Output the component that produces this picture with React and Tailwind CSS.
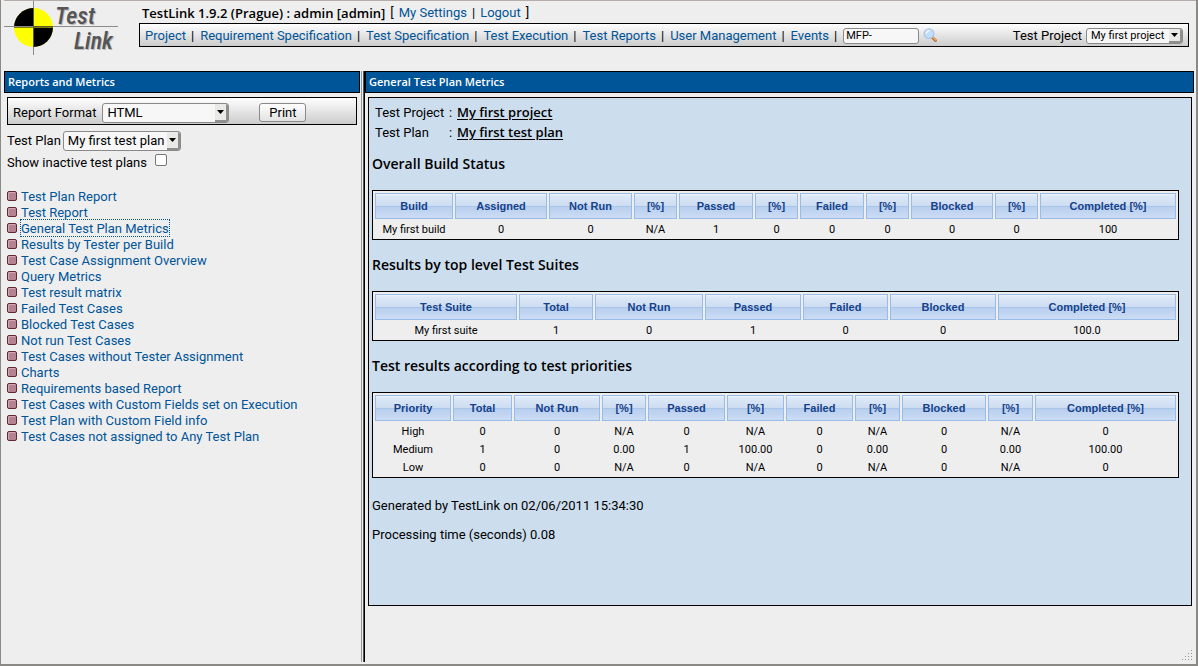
import React from "react";

const NAV = [
  "Project",
  "Requirement Specification",
  "Test Specification",
  "Test Execution",
  "Test Reports",
  "User Management",
  "Events",
];

const REPORTS = [
  "Test Plan Report",
  "Test Report",
  "General Test Plan Metrics",
  "Results by Tester per Build",
  "Test Case Assignment Overview",
  "Query Metrics",
  "Test result matrix",
  "Failed Test Cases",
  "Blocked Test Cases",
  "Not run Test Cases",
  "Test Cases without Tester Assignment",
  "Charts",
  "Requirements based Report",
  "Test Cases with Custom Fields set on Execution",
  "Test Plan with Custom Field info",
  "Test Cases not assigned to Any Test Plan",
];

const BUILDS = {
  widths: [78, 92, 83, 43, 74, 43, 64, 43, 82, 43, 136],
  head: ["Build", "Assigned", "Not Run", "[%]", "Passed", "[%]", "Failed", "[%]", "Blocked", "[%]", "Completed [%]"],
  rows: [["My first build", "0", "0", "N/A", "1", "0", "0", "0", "0", "0", "100"]],
};

const SUITES = {
  widths: [142, 74, 108, 96, 85, 106, 178],
  head: ["Test Suite", "Total", "Not Run", "Passed", "Failed", "Blocked", "Completed [%]"],
  rows: [["My first suite", "1", "0", "1", "0", "0", "100.0"]],
};

const PRIORITIES = {
  widths: [76, 59, 86, 44, 77, 57, 67, 45, 84, 45, 141],
  head: ["Priority", "Total", "Not Run", "[%]", "Passed", "[%]", "Failed", "[%]", "Blocked", "[%]", "Completed [%]"],
  rows: [
    ["High", "0", "0", "N/A", "0", "N/A", "0", "N/A", "0", "N/A", "0"],
    ["Medium", "1", "0", "0.00", "1", "100.00", "0", "0.00", "0", "0.00", "100.00"],
    ["Low", "0", "0", "N/A", "0", "N/A", "0", "N/A", "0", "N/A", "0"],
  ],
};

function Logo() {
  return (
    <svg className="block h-[54px] w-[114px]" viewBox="0 0 114 54" role="img" aria-label="TestLink logo">
      <circle cx="29.5" cy="26.5" r="19.5" fill="#ffff00" />
      <path d="M29.5 26.5V7A19.5 19.5 0 0 0 10 26.5Z" fill="#000" />
      <path d="M29.5 26.5V46A19.5 19.5 0 0 0 49 26.5Z" fill="#000" />
      <path d="M0 25.5H114M29.5 0V54" stroke="#8c8c8c" strokeWidth="1" fill="none" />
      <path d="M29.5 25.5H49M29.5 7V46" stroke="#5a5a30" strokeWidth="1" fill="none" />
      <g fontFamily="'Roboto Condensed', Lato, sans-serif" fontSize="24" fontStyle="italic" fontWeight="500">
        <g fill="#b9b9b9">
          <text x="52" y="24">Test</text>
          <text x="71" y="49">Link</text>
        </g>
        <g fill="#555">
          <text x="51" y="23">Test</text>
          <text x="70" y="48">Link</text>
        </g>
      </g>
    </svg>
  );
}

function Lens() {
  return (
    <svg className="block size-4" viewBox="0 0 16 16" aria-hidden="true">
      <path d="M9.5 9.5L12.5 12.5" stroke="#b0662c" strokeWidth="2.8" strokeLinecap="round" />
      <path d="M9.8 9.2L12.6 12" stroke="#f0a868" strokeWidth="1.5" strokeLinecap="round" />
      <circle cx="6" cy="5.6" r="4.9" fill="#c3defa" stroke="#a9c0e8" strokeWidth="1.1" />
      <path d="M3.4 5.6A2.8 2.8 0 0 1 6.4 2.8" stroke="#f4faff" strokeWidth="1.5" fill="none" />
    </svg>
  );
}

function Select({ id, small, className, options }) {
  return (
    <span className={"relative inline-flex " + className}>
      <select
        id={id}
        className={
          "w-full appearance-none rounded-[3px] border border-[#8a8a8a] bg-[#f7f7f7] pr-3.5 pl-1 text-black outline-none " +
          (small ? "h-4 text-[11px] leading-[14px]" : "h-5 text-[13px] leading-[18px]")
        }
      >
        {options.map((o) => (
          <option key={o}>{o}</option>
        ))}
      </select>
      <span className="pointer-events-none absolute inset-y-px right-px flex w-[13px] items-center justify-center rounded-r-[2px] border-r-2 border-b-2 border-[#8f8f8c] bg-[#e9e9e8]">
        <svg className="block h-[4px] w-[7px]" viewBox="0 0 7 4" aria-hidden="true">
          <path d="M0 0H7L3.5 4Z" fill="#000" />
        </svg>
      </span>
    </span>
  );
}

function Bar({ children }) {
  return (
    <h1 className="flex h-[22px] items-center border border-black bg-[#005498] px-[3px] font-['Open_Sans',sans-serif] text-[11px] font-semibold text-white">
      {children}
    </h1>
  );
}

function Metrics({ title, data }) {
  return (
    <section className="mb-[3px] pt-3">
      <h2 className="mb-4 font-['Open_Sans',sans-serif] text-[14px] leading-5 font-semibold">{title}</h2>
      <table className="w-full table-fixed border-separate border-spacing-[2px] border border-black bg-[#eee] text-center text-[11px]">
        <colgroup>
          {data.widths.map((w, i) => (
            <col key={i} style={{ width: w }} />
          ))}
        </colgroup>
        <thead>
          <tr>
            {data.head.map((h, i) => (
              <th
                key={i}
                scope="col"
                className="h-[26px] border border-[#99bbe8] bg-[linear-gradient(#f0f5fc_0px,#dce8f7_2px,#cddcf1_12px,#a9c5ea_12px,#a9c5ea_13px,#b8cfee_13px,#ccdcf4_24px)] p-0 font-['Liberation_Sans',Arial,sans-serif] font-bold text-[#15428b]"
              >
                {h}
              </th>
            ))}
          </tr>
        </thead>
        <tbody>
          {data.rows.map((r) => (
            <tr key={r[0]}>
              {r.map((c, i) => (
                <td key={i} className="h-4 px-0 pt-0.5 pb-0 leading-[14px] whitespace-nowrap">
                  {c}
                </td>
              ))}
            </tr>
          ))}
        </tbody>
      </table>
    </section>
  );
}

function Header() {
  return (
    <header className="flex h-[71px] shrink-0 border-t border-[#b3aca8] pr-[7px]">
      <Logo />
      <div className="ml-[21px] flex-1">
        <p className="flex h-[22px] items-center gap-[5px] pt-0.5 pl-[3px] leading-4 whitespace-nowrap">
          <b className="font-['Open_Sans',sans-serif] font-semibold">TestLink 1.9.2 (Prague) : admin [admin]</b>
          <span>[</span>
          <a href="#settings" className="text-[#005498]">My Settings</a>
          <span>|</span>
          <a href="#logout" className="text-[#005498]">Logout</a>
          <span>]</span>
        </p>
        <div className="flex h-6 items-center border border-black bg-linear-to-b from-white to-[#ccc] pt-0.5 pr-[5px] pl-[5px] whitespace-nowrap">
          <nav className="flex items-center gap-[6px]">
            {NAV.map((n) => (
              <span key={n} className="flex gap-[5px]">
                <a href="#nav" className="text-[#005498]">{n}</a>
                <span>|</span>
              </span>
            ))}
          </nav>
          <input
            aria-label="Test case identifier"
            defaultValue="MFP-"
            className="ml-[6px] h-4 w-[76px] rounded-[3px] border border-[#8a8a8a] bg-[#f7f7f7] px-0.5 text-[11px]"
          />
          <button type="button" aria-label="Search" className="ml-1">
            <Lens />
          </button>
          <label htmlFor="project" className="mr-1 ml-auto">Test Project</label>
          <Select id="project" small className="w-[97px]" options={["My first project"]} />
        </div>
      </div>
    </header>
  );
}

function Sidebar() {
  return (
    <aside className="w-[356px] shrink-0">
      <Bar>Reports and Metrics</Bar>
      <div className="mt-1 mr-[3px] ml-[3px] flex h-7 items-center border border-black bg-linear-to-b from-white to-[#ccc] pt-[3px] pl-[5px]">
        <label htmlFor="format" className="mr-1.5">Report Format</label>
        <Select id="format" className="w-[127px]" options={["HTML"]} />
        <button
          type="button"
          className="ml-[30px] h-[19px] w-[47px] rounded-[3px] border border-[#8a8a8a] bg-linear-to-b from-white to-[#e2e2e2] leading-4"
        >
          Print
        </button>
      </div>
      <div className="mt-1.5 ml-[3px] flex h-5 items-center gap-0.5">
        <label htmlFor="plan">Test Plan</label>
        <Select id="plan" className="w-[118px]" options={["My first test plan"]} />
      </div>
      <div className="mt-0.5 ml-[3px] flex h-5 items-center gap-2">
        <label htmlFor="inactive">Show inactive test plans</label>
        <input
          id="inactive"
          type="checkbox"
          className="mb-1.5 size-3 appearance-none rounded-[2px] border border-[#777] bg-white"
        />
      </div>
      <ul className="mt-[15px] ml-[3px]">
        {REPORTS.map((r, i) => (
          <li key={r} className="flex h-4 items-center gap-1">
            <span className="size-2.5 rounded-[2px] border border-[#5d2a33] bg-[#b48391] shadow-[inset_1px_1px_0_#cfaab4]" />
            <a
              href="#report"
              className={
                "pt-0.5 leading-[14px] whitespace-nowrap text-[#005498] " +
                (i === 2 ? "outline-1 outline-dotted outline-[#005498]" : "")
              }
            >
              {r}
            </a>
          </li>
        ))}
      </ul>
    </aside>
  );
}

function Report() {
  return (
    <main className="min-w-0 flex-1">
      <Bar>General Test Plan Metrics</Bar>
      <div className="mt-1 mr-[2px] ml-[3px] border border-black bg-[#ccdeed] pt-1 pr-[13px] pb-[60px] pl-[3px]">
        <dl className="grid auto-rows-[20px] grid-cols-[74px_8px_auto] items-baseline pl-[3px] leading-5">
          <dt>Test Project</dt>
          <dd>:</dd>
          <dd className="font-['Open_Sans',sans-serif] font-semibold underline underline-offset-2">My first project</dd>
          <dt>Test Plan</dt>
          <dd>:</dd>
          <dd className="font-['Open_Sans',sans-serif] font-semibold underline underline-offset-2">My first test plan</dd>
        </dl>
        <Metrics title="Overall Build Status" data={BUILDS} />
        <Metrics title="Results by top level Test Suites" data={SUITES} />
        <Metrics title="Test results according to test priorities" data={PRIORITIES} />
        <p className="mt-[18px] leading-5">Generated by TestLink on 02/06/2011 15:34:30</p>
        <p className="mt-[9px] leading-5">Processing time (seconds) 0.08</p>
      </div>
    </main>
  );
}

export default function App() {
  return (
    <div className="relative flex min-h-screen flex-col border-r-2 border-b-2 border-l border-[#8b8985] bg-[#eee] pl-[3px] font-[Roboto,'Noto_Sans',sans-serif] text-[13px] text-black">
      <Header />
      <div className="mb-0.5 flex flex-1 pr-0.5">
        <Sidebar />
        <div className="ml-px flex w-1 shrink-0 border-l border-[#999]">
          <div className="ml-px flex-1 border-r border-black bg-[#555]" />
        </div>
        <Report />
      </div>
      <svg className="absolute right-[3px] bottom-[2px] h-3 w-3" viewBox="0 0 12 12" aria-hidden="true">
        <path
          d="M10 0h1v1h-1zM7 3h1v1h-1zM10 3h1v1h-1zM4 6h1v1h-1zM7 6h1v1h-1zM10 6h1v1h-1zM1 9h1v1h-1zM4 9h1v1h-1zM7 9h1v1h-1zM10 9h1v1h-1z"
          fill="#9b9892"
        />
      </svg>
    </div>
  );
}
